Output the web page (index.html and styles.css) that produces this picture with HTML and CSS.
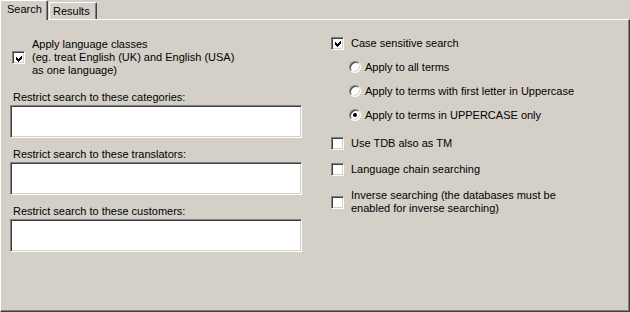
FILE: index.html
```html
<!DOCTYPE html>
<html lang="en">
<head>
    <meta charset="UTF-8">
    <title>Search options</title>
    <link rel="stylesheet" href="styles.css">
</head>
<body>
    <div class="dialog">
        <!-- Tab strip -->
        <div class="tabs">
            <div class="tab active">Search</div>
            <div class="tab">Results</div>
        </div>

        <!-- Search page -->
        <div class="panel">
            <div class="col-left">
                <div class="option lang">
                    <span class="check on"><svg width="9" height="9" viewBox="0 0 9 9"><path d="M1 3 L3 5 L7 1 L7 4 L3 8 L1 6 Z" fill="#000" shape-rendering="crispEdges"/></svg></span>
                    <span class="text">Apply language classes<br>(eg. treat English (UK) and English (USA)<br>as one language)</span>
                </div>

                <div class="field first">
                    <label class="field-label">Restrict search to these categories:</label>
                    <div class="textbox"></div>
                </div>
                <div class="field">
                    <label class="field-label">Restrict search to these translators:</label>
                    <div class="textbox"></div>
                </div>
                <div class="field">
                    <label class="field-label">Restrict search to these customers:</label>
                    <div class="textbox"></div>
                </div>
            </div>

            <div class="col-right">
                <div class="option row">
                    <span class="check on"><svg width="9" height="9" viewBox="0 0 9 9"><path d="M1 3 L3 5 L7 1 L7 4 L3 8 L1 6 Z" fill="#000" shape-rendering="crispEdges"/></svg></span>
                    <span class="text">Case sensitive search</span>
                </div>
                <div class="option row sub">
                    <span class="radio"></span>
                    <span class="text">Apply to all terms</span>
                </div>
                <div class="option row sub">
                    <span class="radio"></span>
                    <span class="text">Apply to terms with first letter in Uppercase</span>
                </div>
                <div class="option row sub">
                    <span class="radio on"></span>
                    <span class="text">Apply to terms in UPPERCASE only</span>
                </div>
                <div class="option row tdb">
                    <span class="check"></span>
                    <span class="text">Use TDB also as TM</span>
                </div>
                <div class="option row chain">
                    <span class="check"></span>
                    <span class="text">Language chain searching</span>
                </div>
                <div class="option inverse">
                    <span class="check"></span>
                    <span class="text">Inverse searching (the databases must be<br>enabled for inverse searching)</span>
                </div>
            </div>
        </div>
    </div>
</body>
</html>
```

FILE: styles.css
```css
body {
    margin: 0;
    padding: 0;
    background-color: #D4D0C8;
    font-family: "Liberation Sans", Arial, sans-serif;
    font-size: 11px;
    color: #000000;
}
.dialog {
    width: 630px;
    height: 312px;
    overflow: hidden;
}

/* Tabs */
.tabs {
    display: flex;
    align-items: flex-end;
    height: 19px;
    position: relative;
    z-index: 1;
}
.tab {
    box-sizing: border-box;
    height: 17px;
    line-height: 13px;
    padding: 2px 6px 1px 3px;
    margin-left: 1px;
    background-color: #D4D0C8;
    border-top: 1px solid #FFFFFF;
    border-left: 1px solid #FFFFFF;
    border-right: 1px solid #404040;
    box-shadow: inset -1px 0 0 #808080;
    border-radius: 2px 2px 0 0;
}
.tab.active {
    height: 20px;
    width: 48px;
    margin-left: 0;
    margin-bottom: -1px;
    padding: 2px 5px 4px 6px;
}

/* Panel */
.panel {
    box-sizing: border-box;
    height: 293px;
    border-top: 1px solid #FFFFFF;
    border-left: 1px solid #FFFFFF;
    border-right: 1px solid #404040;
    border-bottom: 1px solid #404040;
    box-shadow: inset -1px -1px 0 #808080;
    padding-left: 9px;
    display: grid;
    grid-template-columns: 292px 1fr;
    column-gap: 29px;
    align-items: start;
}

/* Options */
.option {
    display: flex;
    align-items: center;
    line-height: 13px;
}
.check {
    box-sizing: border-box;
    width: 13px;
    height: 13px;
    flex: none;
    background-color: #FFFFFF;
    border: 1px solid;
    border-color: #808080 #FFFFFF #FFFFFF #808080;
    box-shadow: inset 1px 1px 0 #404040, inset -1px -1px 0 #D4D0C8;
    display: flex;
    align-items: center;
    justify-content: center;
    margin-right: 7px;
}
.check svg {
    display: block;
    margin: 1px 0 0 1px;
}
.radio {
    box-sizing: border-box;
    width: 12px;
    height: 12px;
    flex: none;
    border-radius: 50%;
    background-color: #FFFFFF;
    border: 1px solid;
    border-color: #808080 #FFFFFF #FFFFFF #808080;
    box-shadow: inset 1px 1px 0 #404040, inset -1px -1px 0 #D4D0C8;
    position: relative;
    margin-right: 4px;
}
.radio.on::after {
    content: "";
    position: absolute;
    left: 3px;
    top: 3px;
    width: 4px;
    height: 4px;
    border-radius: 50%;
    background-color: #000000;
}

/* Left column */
.col-left {
    padding-top: 18px;
}
.lang {
    margin-left: 2px;
}
.field {
    margin-top: 9px;
}
.field.first {
    margin-top: 13px;
}
.field-label {
    display: block;
    line-height: 14px;
    padding-left: 3px;
}
.textbox {
    box-sizing: border-box;
    height: 33px;
    margin-top: 1px;
    background-color: #FFFFFF;
    border: 1px solid;
    border-color: #808080 #FFFFFF #FFFFFF #808080;
    box-shadow: inset 1px 1px 0 #404040, inset -1px -1px 0 #D4D0C8;
}

/* Right column */
.col-right {
    padding-top: 11px;
}
.row {
    height: 24px;
}
.sub {
    padding-left: 18px;
}
.tdb {
    margin-top: 4px;
}
.chain {
    margin-top: 2px;
}
.inverse {
    margin-top: 8px;
}
```
